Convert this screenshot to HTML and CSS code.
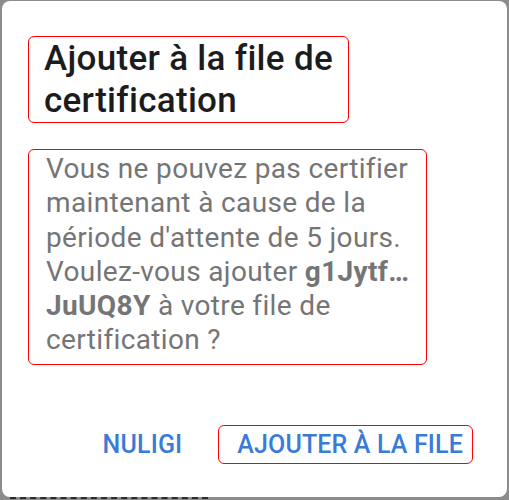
FILE: index.html
```html
<!DOCTYPE html>
<html lang="fr">

<head>
    <meta charset="UTF-8">
    <meta name="viewport" content="width=device-width, initial-scale=1.0">
    <title>Ajouter à la file de certification</title>

    <link rel="stylesheet" href="styles.css">
</head>

<body>
    <div class="dialog">
        <h2 class="dialog-title">Ajouter à la file de<br>certification</h2>

        <p class="dialog-text">
            Vous ne pouvez pas certifier<br>
            maintenant à cause de la<br>
            période d'attente de 5 jours.<br>
            Voulez-vous ajouter <b>g1Jytf…<br>JuUQ8Y</b> à votre file de<br>
            certification ?
        </p>

        <div class="dialog-actions">
            <button class="btn">NULIGI</button>
            <button class="btn btn-main">AJOUTER À LA FILE</button>
        </div>
    </div>

    <div class="under"></div>
</body>

</html>
```

FILE: styles.css
```css
* {
    font-family: Roboto, "Noto Sans", sans-serif;
    box-sizing: border-box;
}

body {
    margin: 0;
    height: 500px;
    overflow: hidden;
    background-color: #8c8c8c;
}

.dialog {
    margin: 1px 2px 0 2px;
    height: 496px;
    background-color: #fff;
    border-radius: 8px;
    padding: 35px 28px 0 26px;
    display: flex;
    flex-direction: column;
}

.dialog-title {
    margin: 0;
    width: 321px;
    padding: 1px 0 0 15px;
    border: 1px solid red;
    border-radius: 6px;
    font-size: 35px;
    font-weight: 500;
    letter-spacing: 0.3px;
    line-height: 42px;
    color: #1c1c1c;
}

.dialog-text {
    margin: 26px 0 0 0;
    width: 399px;
    padding: 2px 0 6px 17px;
    border: 1px solid red;
    border-radius: 6px;
    font-size: 28px;
    letter-spacing: 0.35px;
    line-height: 34.3px;
    color: #757575;
}

.dialog-text b {
    font-weight: 700;
}

.dialog-actions {
    margin-top: 60px;
    display: flex;
    justify-content: flex-end;
    align-items: center;
    gap: 26px;
    padding-right: 6px;
}

.btn {
    border: 1px solid transparent;
    background: none;
    border-radius: 6px;
    padding: 4px 9px 4px 18px;
    font-size: 25px;
    font-weight: 500;
    letter-spacing: 0.15px;
    line-height: 29px;
    color: #3a7bd8;
}

.btn-main {
    border-color: red;
}

.under {
    margin: 0 0 0 10px;
    width: 198px;
    border-top: 2px dashed #2b2b2b;
}
```
